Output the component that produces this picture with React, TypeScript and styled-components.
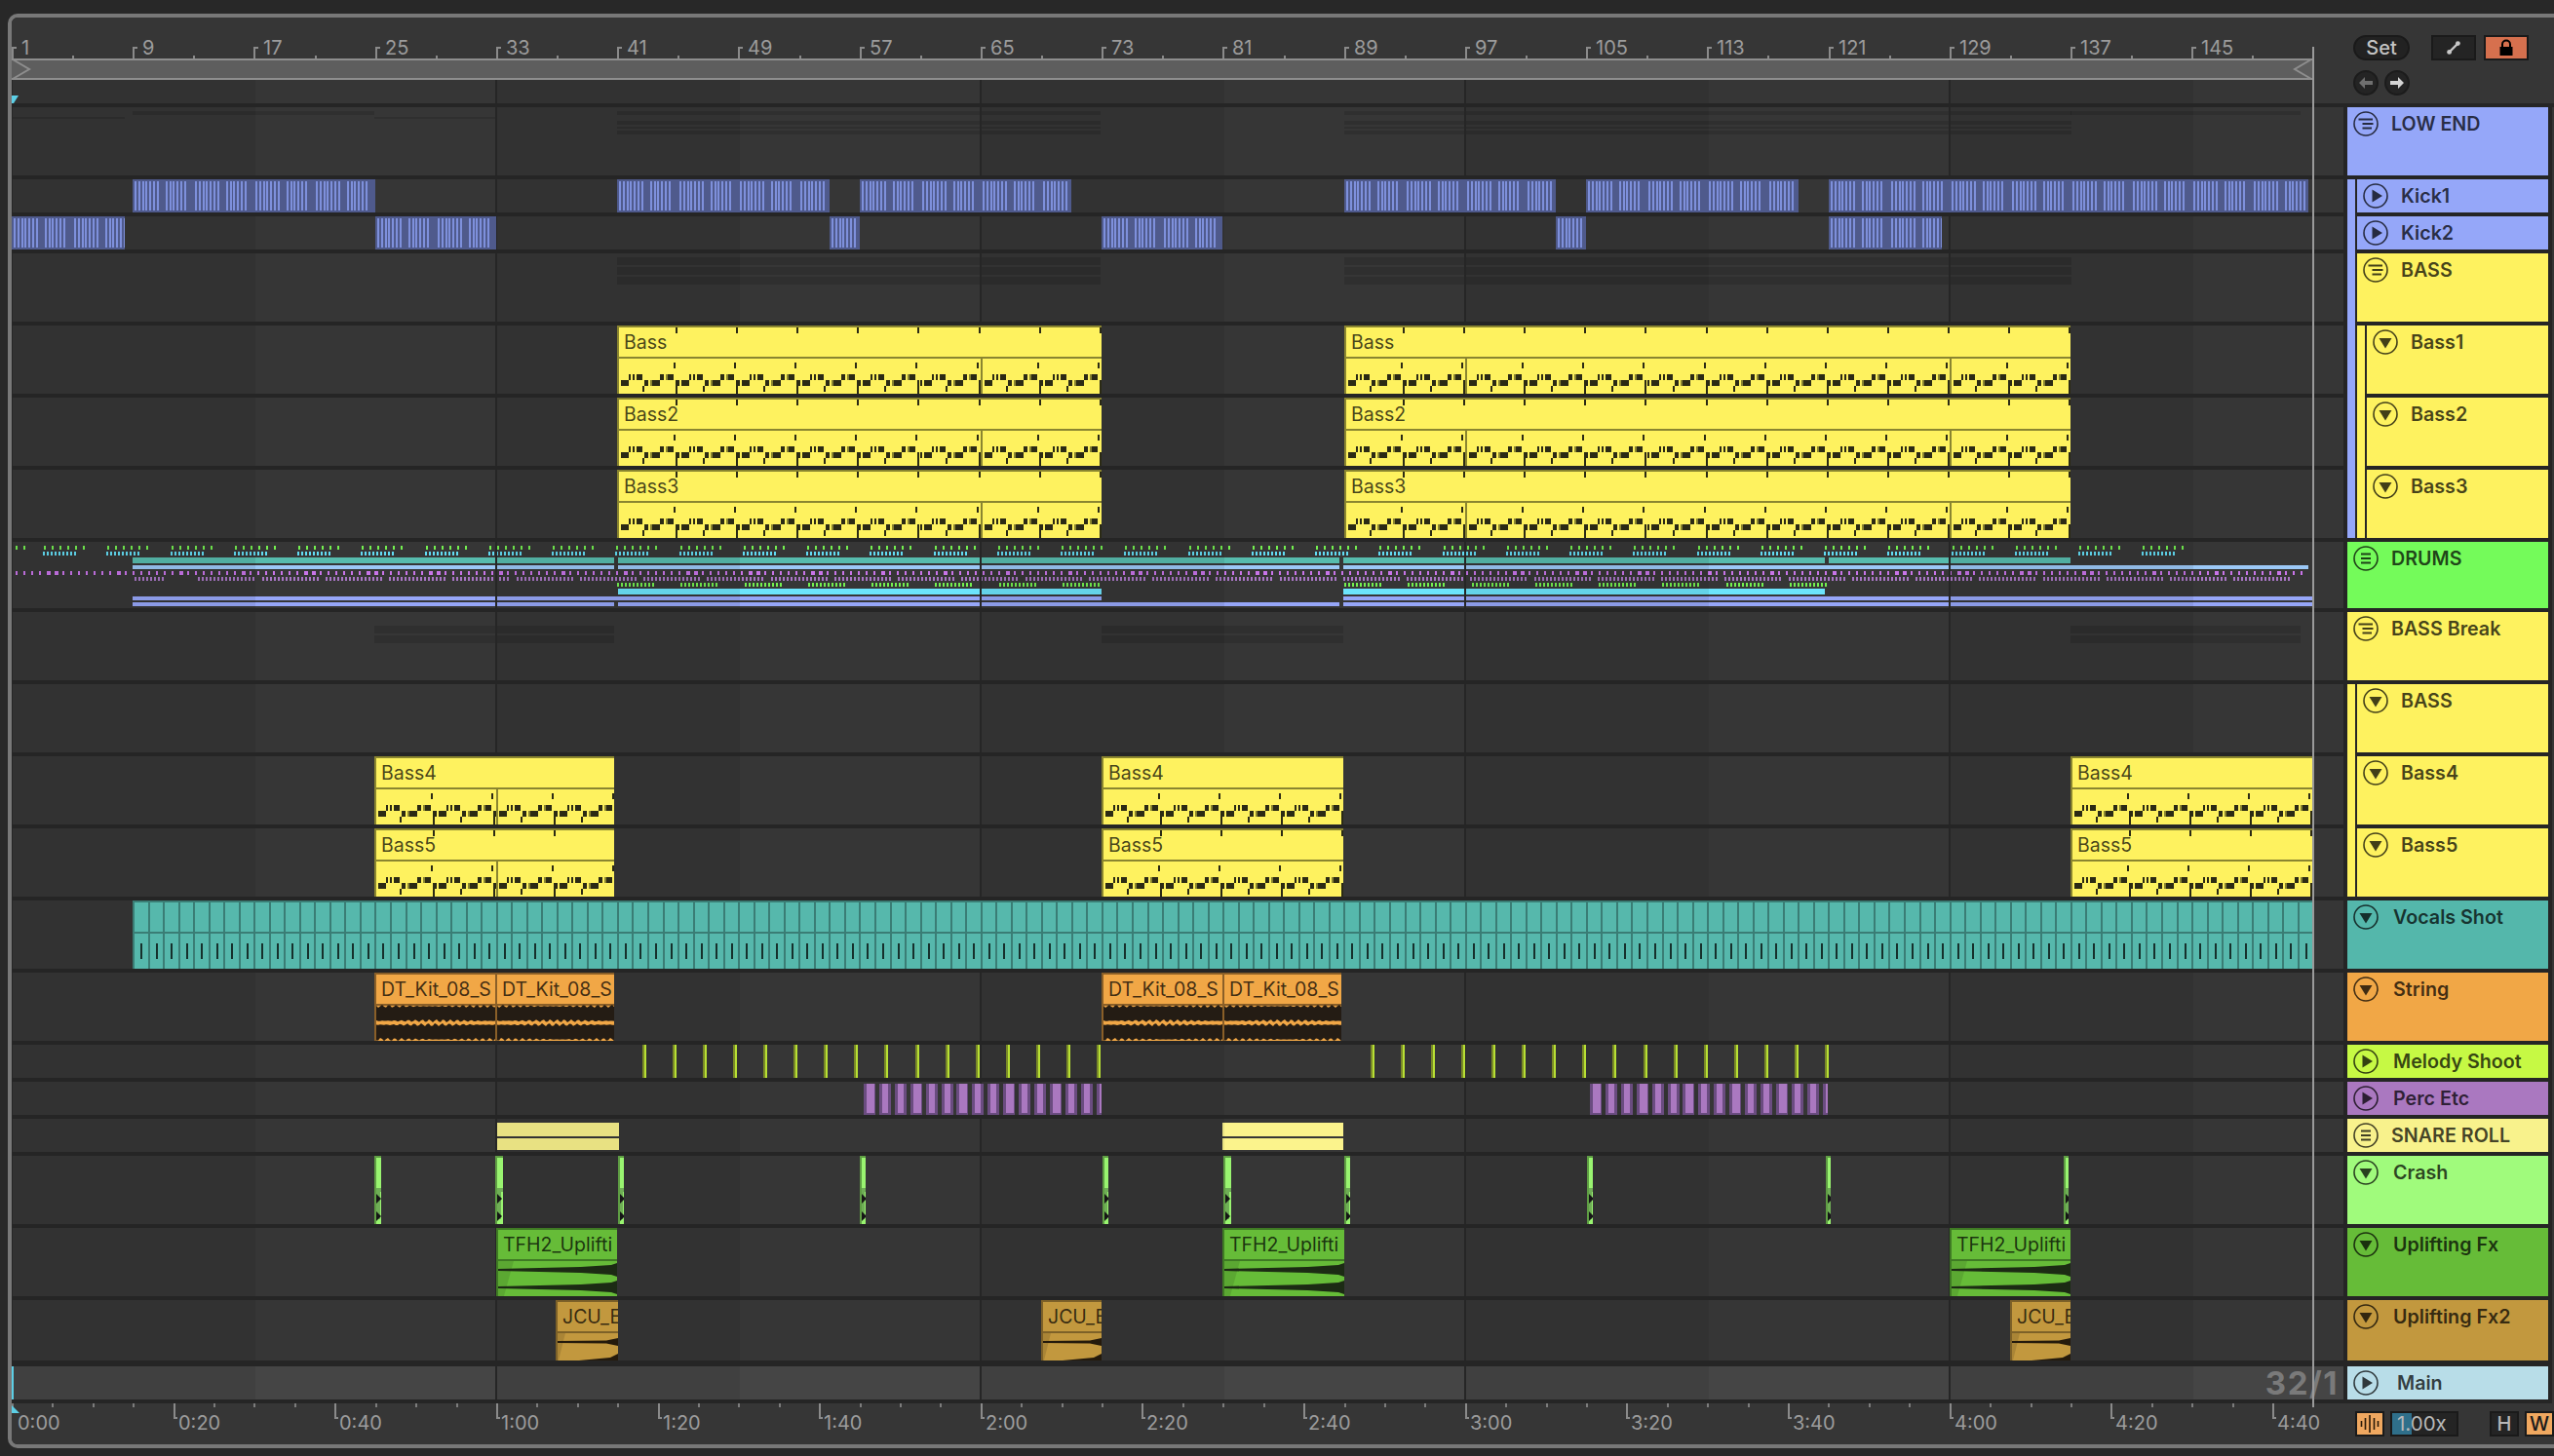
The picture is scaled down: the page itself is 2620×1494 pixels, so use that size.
import React from 'react';
import styled, { createGlobalStyle } from 'styled-components';

const BAR = 15.53;
const SEC = 8.282;
const LANE_W = 2392;
const LOOP_END = 2360;
const DRUM_P = 65.25;
const bx = (b: number) => Math.round((b - 1) * BAR);

const INK = 'rgba(0, 0, 0, 0.74)';
const BLUE = '#95a7f9';
const YELLOW = '#fef25f';
const OLIVE = '#8a8530';

type IconKind = 'group' | 'lines' | 'right' | 'down';

type Track = {
  name: string;
  h: number;
  gap?: number;
  color: string;
  icon: IconKind;
  textLeft?: number;
  stripes?: string[];
  last?: boolean;
};

const tracks: Track[] = [
  { name: 'LOW END', h: 70, color: BLUE, icon: 'group', textLeft: 45 },
  { name: 'Kick1', h: 34, color: BLUE, icon: 'right', textLeft: 45, stripes: [BLUE] },
  { name: 'Kick2', h: 34, color: BLUE, icon: 'right', textLeft: 45, stripes: [BLUE] },
  { name: 'BASS', h: 70, color: YELLOW, icon: 'group', textLeft: 45, stripes: [BLUE] },
  { name: 'Bass1', h: 70, color: YELLOW, icon: 'down', textLeft: 45, stripes: [BLUE, YELLOW] },
  { name: 'Bass2', h: 70, color: YELLOW, icon: 'down', textLeft: 45, stripes: [BLUE, YELLOW] },
  { name: 'Bass3', h: 70, color: YELLOW, icon: 'down', textLeft: 45, stripes: [BLUE, YELLOW], last: true },
  { name: 'DRUMS', h: 68, color: '#74fb5a', icon: 'lines', textLeft: 45 },
  { name: 'BASS Break', h: 70, color: YELLOW, icon: 'group', textLeft: 45 },
  { name: 'BASS', h: 70, color: YELLOW, icon: 'down', textLeft: 45, stripes: [YELLOW] },
  { name: 'Bass4', h: 70, color: YELLOW, icon: 'down', textLeft: 45, stripes: [YELLOW] },
  { name: 'Bass5', h: 70, color: YELLOW, icon: 'down', textLeft: 45, stripes: [YELLOW], last: true },
  { name: 'Vocals Shot', h: 70, color: '#54b7ab', icon: 'down' },
  { name: 'String', h: 70, color: '#f1a746', icon: 'down' },
  { name: 'Melody Shoot', h: 34, color: '#c6f944', icon: 'right' },
  { name: 'Perc Etc', h: 34, color: '#aa78c0', icon: 'right' },
  { name: 'SNARE ROLL', h: 34, color: '#f8f28c', icon: 'lines', textLeft: 45 },
  { name: 'Crash', h: 70, color: '#a0fb7c', icon: 'down' },
  { name: 'Uplifting Fx', h: 70, color: '#66bc38', icon: 'down' },
  { name: 'Uplifting Fx2', h: 62, gap: 6, color: '#c2983e', icon: 'down' },
  { name: 'Main', h: 34, color: '#b8dde8', icon: 'right', textLeft: 51 },
];

const range = (n: number) => Array.from({ length: n }, (_, i) => i);

const GlobalStyle = createGlobalStyle`
  html, body {
    margin: 0;
    padding: 0;
    background: #282828;
    overflow: hidden;
  }
  * { box-sizing: border-box; }
`;

const Page = styled.div`
  width: 2620px;
  height: 1494px;
  padding: 14px 0 8px 8px;
  background: #282828;
  font-family: Inter, "Liberation Sans", sans-serif;
`;

const Frame = styled.div`
  position: relative;
  width: 2612px;
  height: 1472px;
  border: 4px solid #787878;
  border-right: 0;
  border-radius: 10px 0 0 10px;
  background: #252525;
  overflow: hidden;
`;

const TopBar = styled.div`
  display: flex;
  height: 92px;
  border-bottom: 4px solid #252525;
  background: #363636;
`;

const TopLeft = styled.div`
  width: ${LANE_W}px;
  display: flex;
  flex-direction: column;
`;

const BarRuler = styled.div`
  position: relative;
  height: 42px;
`;

const BarMark = styled.div`
  position: absolute;
  top: 30px;
  width: 5px;
  height: 12px;
  border-left: 2px solid #8a8a8a;
  border-top: 2px solid #8a8a8a;
`;

const MinorMark = styled.div`
  position: absolute;
  bottom: 0;
  width: 2px;
  height: 3px;
  background: #8a8a8a;
`;

const BarLabel = styled.span`
  position: absolute;
  top: 20px;
  font-size: 20px;
  line-height: 22px;
  color: #9c9c9c;
`;

const Scrub = styled.div`
  width: ${LOOP_END + 2}px;
  height: 22px;
  background: #5e5e5e;
  border-top: 2px solid #8e8e8e;
  border-bottom: 2px solid #8e8e8e;
  position: relative;
`;

const ScrubMarks = styled.svg`
  position: absolute;
  left: 0;
  top: -2px;
`;

const StartMarker = styled.svg`
  position: absolute;
  left: 0;
  top: 16px;
  z-index: 2;
  width: 8px;
  height: 8px;
`;

const Controls = styled.div`
  flex: 1;
  padding: 18px 0 0 10px;
`;

const ControlRow = styled.div`
  display: flex;
  align-items: center;
`;

const NavRow = styled.div`
  display: flex;
  gap: 6px;
  margin-top: 10px;
`;

const SetPill = styled.div`
  width: 58px;
  height: 26px;
  margin-right: 22px;
  border-radius: 13px;
  background: #222222;
  border: 2px solid #1a1a1a;
  color: #c4c4c4;
  font-size: 20px;
  font-weight: 500;
  line-height: 22px;
  text-align: center;
`;

const SquareBtn = styled.div<{ $bg?: string; $mr?: number }>`
  width: 46px;
  height: 26px;
  margin-right: ${p => p.$mr ?? 0}px;
  background: ${p => p.$bg ?? '#242424'};
  border: 2px solid #1a1a1a;
  display: flex;
  align-items: center;
  justify-content: center;
`;

const NavBtn = styled.div`
  width: 26px;
  height: 26px;
  border-radius: 50%;
  background: #242424;
  border: 2px solid #1c1c1c;
  display: flex;
  align-items: center;
  justify-content: center;
`;

const TrackRow = styled.div<{ $h: number }>`
  display: flex;
  height: ${p => p.$h}px;
  background: #252525;
`;

const Lane = styled.div<{ $h: number; $main?: boolean }>`
  position: relative;
  width: ${LANE_W}px;
  height: ${p => p.$h}px;
  background: ${p => (p.$main ? '#454545' : '#363636')};

  &::after {
    content: '';
    position: absolute;
    inset: 0;
    z-index: 1;
    pointer-events: none;
    background-image: linear-gradient(90deg, rgba(0, 0, 0, 0.075) 0 248.5px, transparent 248.5px 495px, #262626 495px 497px);
    background-size: 497px 100%;
    background-position: 1px 0;
    background-repeat: repeat-x;
  }
`;

const Ghost = styled.div`
  position: absolute;
  background: rgba(0, 0, 0, 0.13);
`;

const Preview = styled.svg`
  position: absolute;
  left: 0;
  top: 0;
`;

const Overlay = styled.svg`
  position: absolute;
  left: -2px;
  top: -2px;
`;

const KickClip = styled.div`
  position: absolute;
  top: 0;
  height: 34px;
  z-index: 2;
  background: #4f5a8c;
  overflow: hidden;

  & > svg {
    left: 0;
    top: 0;
  }
`;

const PercClip = styled.div`
  position: absolute;
  top: 0;
  height: 34px;
  z-index: 2;
  overflow: hidden;

  & > svg {
    left: 0;
    top: 0;
  }
`;

const HitClip = styled.div`
  position: absolute;
  top: 0;
  height: 70px;
  z-index: 2;
  overflow: hidden;

  & > svg {
    left: 0;
    top: 0;
  }
`;

const Tick = styled.div`
  position: absolute;
  top: 0;
  width: 4px;
  height: 34px;
  z-index: 2;
  background: linear-gradient(90deg, #7a8a28 0 2px, #b8e034 2px);
`;

const Clip = styled.div<{ $bg: string; $edge: string }>`
  position: absolute;
  top: 0;
  bottom: 0;
  z-index: 2;
  overflow: hidden;
  background: ${p => p.$bg};
  border-left: 2px solid ${p => p.$edge};
  border-top: 2px solid ${p => p.$edge};
`;

const ClipTitle = styled.div<{ $edge: string }>`
  height: 32px;
  padding: 0 0 0 5px;
  border-bottom: 2px solid ${p => p.$edge};
  font-size: 19.5px;
  line-height: 30px;
  color: ${INK};
  white-space: nowrap;
  overflow: hidden;
`;

const PlayStrip = styled.div`
  position: absolute;
  left: 0;
  top: 0;
  bottom: 0;
  width: 2px;
  z-index: 2;
  background: #5ccfe6;
`;

const GridSize = styled.div`
  position: absolute;
  right: 5px;
  top: 0;
  z-index: 2;
  font-size: 33px;
  line-height: 34px;
  font-weight: 700;
  letter-spacing: 1.5px;
  color: #7a7a7a;
`;

const HeaderCol = styled.div`
  display: flex;
  width: 206px;
  margin-left: 4px;
`;

const Stripe = styled.div<{ $color: string; $h: number }>`
  flex: none;
  width: 8px;
  height: ${p => p.$h}px;
  margin-right: 2px;
  background: ${p => p.$color};
`;

const TrackHead = styled.div<{ $color: string; $h: number }>`
  display: flex;
  align-items: flex-start;
  flex: 1;
  height: ${p => p.$h}px;
  padding: 4px 0 0 6px;
  background: ${p => p.$color};
  color: ${INK};
`;

const IconSvg = styled.svg`
  flex: none;
  width: 26px;
  height: 26px;
`;

const TrackName = styled.span<{ $left: number }>`
  margin-left: ${p => p.$left - 32}px;
  font-size: 19.7px;
  font-weight: 600;
  line-height: 26px;
  white-space: nowrap;
`;

const RightEdge = styled.div`
  flex: 1;
  margin-left: 4px;
  background: #363636;
`;

const BottomBar = styled.div`
  display: flex;
  height: 42px;
  background: #363636;
`;

const TimeRuler = styled.div`
  position: relative;
  width: ${LANE_W}px;
  overflow: hidden;
`;

const EndMarker = styled.svg`
  position: absolute;
  left: 0;
  top: 2px;
  width: 8px;
  height: 8px;
  z-index: 2;
`;

const MinorTime = styled.div`
  position: absolute;
  top: 0;
  width: 2px;
  height: 4px;
  background: #7c7c7c;
`;

const MajorTime = styled.div`
  position: absolute;
  top: 0;
  width: 4px;
  height: 16px;
  border-left: 2px solid #8a8a8a;
  border-bottom: 2px solid #8a8a8a;
`;

const TimeLabel = styled.span`
  position: absolute;
  top: 6px;
  font-size: 20px;
  line-height: 28px;
  color: #9c9c9c;
`;

const BottomControls = styled.div`
  flex: 1;
  display: flex;
  gap: 6px;
  padding: 8px 0 0 16px;
`;

const SquareSmall = styled.div<{ $bg?: string; $fg?: string; $ml?: number }>`
  width: 30px;
  height: 26px;
  margin-left: ${p => p.$ml ?? 0}px;
  background: ${p => p.$bg ?? '#242424'};
  color: ${p => p.$fg ?? '#b8b8b8'};
  border: 2px solid #1a1a1a;
  font-size: 20px;
  font-weight: 500;
  display: flex;
  align-items: center;
  justify-content: center;
`;

const ZoomField = styled.div`
  position: relative;
  width: 70px;
  height: 26px;
  padding-left: 5px;
  background: #242424;
  border: 2px solid #1a1a1a;
  display: flex;
  align-items: center;
`;

const ZoomFill = styled.div`
  position: absolute;
  left: 0;
  top: 0;
  bottom: 0;
  width: 20px;
  background: #2f6f8a;
`;

const ZoomText = styled.span`
  position: relative;
  font-size: 20.5px;
  line-height: 22px;
  color: #b8b8b8;
`;

const LoopLine = styled.div`
  position: absolute;
  left: ${LOOP_END}px;
  top: 30px;
  width: 2px;
  height: 1396px;
  z-index: 3;
  background: #9a9a9a;
`;

const TrackIcon = ({ kind }: { kind: IconKind }) => (
  <IconSvg viewBox="0 0 26 26">
    <circle cx="13" cy="13" r="12" fill="none" stroke="currentColor" strokeWidth="1.6" />
    {kind === 'group' && <path d="M5.5 8.5H20M9.5 13H20.5M9.5 17.5H19" stroke="currentColor" strokeWidth="1.8" />}
    {kind === 'lines' && <path d="M8 8.5H18M8 13H18M8 17.5H18" stroke="currentColor" strokeWidth="1.8" />}
    {kind === 'right' && <path d="M9.5 6.5L20 13L9.5 19.5Z" fill="currentColor" />}
    {kind === 'down' && <path d="M6.5 9H19.5L13 19.5Z" fill="currentColor" />}
  </IconSvg>
);

const MIDI_A: [number, number][] = [[12, 2], [16, 2], [20, 6], [44, 4], [52, 6]];
const MIDI_B: [number, number][] = [[0, 2], [4, 8], [28, 4], [36, 8], [60, 2]];

const MidiNotes = ({ left, width, titleTicks }: { left: number; width: number; titleTicks: boolean }) => {
  const P = 62.12;
  const n = Math.ceil(width / P);
  const dark = '#2b2a14';
  return (
    <Overlay width={width} height={70} shapeRendering="crispEdges">
      {range(n).map(k => {
        const o = Math.round(k * P);
        return (
          <g key={k}>
            {MIDI_A.map(([x, w]) => <rect key={x} x={o + x} y={50} width={w} height={6} fill={dark} />)}
            <rect x={o + 50} y={50} width={2} height={6} fill={OLIVE} />
            {MIDI_B.map(([x, w]) => <rect key={x} x={o + x} y={56} width={w} height={6} fill={dark} />)}
            <rect x={o + 34} y={56} width={2} height={6} fill={OLIVE} />
            <rect x={o + 26} y={62} width={2} height={6} fill={dark} />
            <rect x={o + 60} y={62} width={2} height={8} fill={dark} />
            <rect x={o + 58} y={38} width={2} height={6} fill={dark} />
            {titleTicks && <rect x={o + 60} y={2} width={2} height={6} fill={dark} />}
          </g>
        );
      })}
      {[33, 65, 97, 129].map(b => (
        <rect key={b} x={bx(b) - left} y={34} width={2} height={36} fill={OLIVE} />
      ))}
    </Overlay>
  );
};

const jag = (w: number, cy: number, amp: number, seed: number) => {
  const n = (x: number, s: number) => amp + Math.sin(x * 0.9 + s) * 0.9 + Math.sin(x * 2.3 + s * 2) * 0.7;
  let top = `M0 ${cy}`;
  let bot = '';
  for (let x = 0; x <= w; x += 2) {
    top += `L${x} ${(cy - n(x, seed)).toFixed(1)}`;
    bot = `L${x} ${(cy + n(x, seed + 3)).toFixed(1)}` + bot;
  }
  return top + bot + 'Z';
};

const StringWave = ({ width }: { width: number }) => (
  <Overlay width={width} height={70}>
    <path d={jag(width, 42, 7.5, 1)} fill="#241c14" />
    <path d={jag(width, 61, 7.5, 2)} fill="#241c14" />
  </Overlay>
);

const wedge = (w: number, cy: number) =>
  `M0 ${cy - 1}L${w * 0.7} ${cy - 3}L${w - 6} ${cy - 5}L${w} ${cy - 7}V${cy + 7}L${w - 6} ${cy + 5}L${w * 0.7} ${cy + 3}L0 ${cy + 1}Z`;

const FxWave = ({ width }: { width: number }) => (
  <Overlay width={width} height={70}>
    <path d="M0 34H18L8 70H0Z" fill="rgba(0,0,0,0.1)" />
    <path d={wedge(width, 43)} fill="#1c2b14" />
    <path d={wedge(width, 61)} fill="#1c2b14" />
  </Overlay>
);

const GoldWave = ({ width }: { width: number }) => (
  <Overlay width={width} height={62}>
    <path d="M0 34H10L3 62H0Z" fill="rgba(0,0,0,0.12)" />
    <path d={`M0 42L${width - 12} 41.5L${width} 39V47L${width - 12} 44.5L0 44Z`} fill="#241a0c" />
    <path d={`M${width - 40} 62L${width - 8} 59L${width} 55V62Z`} fill="#241a0c" />
  </Overlay>
);

const KickHits = ({ width }: { width: number }) => {
  const P = 31.06;
  const n = Math.ceil(width / P);
  return (
    <Overlay width={width} height={34} shapeRendering="crispEdges">
      {range(n).map(k => {
        const o = Math.round(k * P);
        const offs = k % 2 === 0 ? [2, 6, 10, 13, 17, 21, 25] : [3, 7, 10, 14, 18, 22];
        return offs.map(x => <rect key={`${k}-${x}`} x={o + x} y={2} width={2} height={30} fill="#7e90dc" />);
      })}
    </Overlay>
  );
};

const PercHits = ({ width }: { width: number }) => (
  <Overlay width={width} height={34} shapeRendering="crispEdges">
    {range(Math.ceil(width / 15.9)).map(k => {
      const o = Math.round(k * 15.9);
      return (
        <g key={k}>
          <rect x={o} y={2} width={12} height={32} fill="#6a4c80" />
          <rect x={o + 3} y={2} width={k % 3 === 0 ? 8 : 6} height={30} fill="#aa78c0" />
        </g>
      );
    })}
  </Overlay>
);

const CrashHit = ({ width }: { width: number }) => (
  <Overlay width={width} height={70} shapeRendering="crispEdges">
    <rect x={0} y={0} width={width} height={70} fill="#99f470" />
    <rect x={0} y={0} width={2} height={70} fill="#5f9e44" />
    <rect x={0} y={0} width={width} height={2} fill="#5f9e44" />
    <rect x={2} y={33} width={width} height={4} fill="#6fae56" />
    <rect x={2} y={37} width={width / 2} height={28} fill="#6fae56" />
    <path d="M2 39L7 44L2 49Z" fill="#161616" shapeRendering="auto" />
    <path d="M2 57L7 62L2 67Z" fill="#161616" shapeRendering="auto" />
  </Overlay>
);

const VocalStrip = ({ width }: { width: number }) => {
  const n = Math.ceil(width / BAR);
  const line = '#3a7d75';
  return (
    <Overlay width={width} height={70} shapeRendering="crispEdges">
      <rect x={0} y={0} width={width} height={2} fill={line} />
      <rect x={0} y={32} width={width} height={2} fill={line} />
      {range(n).map(k => {
        const x = Math.round(k * BAR);
        return (
          <g key={k}>
            <rect x={x} y={0} width={2} height={70} fill={line} />
            <rect x={x + 8} y={44} width={2} height={16} fill="#16302c" />
          </g>
        );
      })}
    </Overlay>
  );
};

// ---- what sits in each lane, in pixels or bars from the arrangement start ----

const Ghosts = ({ items }: { items: [number, number, number, number][] }) => (
  <>
    {items.map(([x, y, w, h], i) => (
      <Ghost key={i} style={{ left: x, top: y, width: w, height: h }} />
    ))}
  </>
);

const spanBars = (from: number, to: number) => ({ left: bx(from), width: bx(to) - bx(from) });

const lowEndGhosts: [number, number, number, number][] = [
  [0, 10, 116, 2], [124, 4, 248, 4], [372, 10, 124, 2],
  ...[bx(41), bx(89)].flatMap((x, i) => {
    const w = i === 0 ? 496 : 746;
    return [[x, 4, w, 4], [x, 14, w, 4], [x, 20, w, 2], [x, 24, w, 4]] as [number, number, number, number][];
  }),
  [bx(137), 4, 236, 4],
];

const bassGhosts: [number, number, number, number][] = [bx(41), bx(89)].flatMap((x, i) => {
  const w = i === 0 ? 496 : 746;
  return [[x, 4, w, 8], [x, 14, w, 8], [x, 24, w, 8]] as [number, number, number, number][];
});

const breakGhosts: [number, number, number, number][] = [
  [372, 14, 246, 8], [372, 24, 246, 8],
  [bx(73), 14, 248, 8], [bx(73), 24, 248, 8],
  [bx(137), 14, 236, 8], [bx(137), 24, 236, 8],
];

const DrumsPreview = () => {
  const rects: React.ReactNode[] = [];
  const add = (x: number, y: number, w: number, h: number, fill: string) =>
    rects.push(<rect key={rects.length} x={x} y={y} width={w} height={h} fill={fill} />);

  add(4, 4, 2, 4, '#74f050');
  add(12, 4, 2, 4, '#74f050');
  for (let k = 0; k < 34; k++) {
    const o = Math.round(33 + k * DRUM_P);
    if (o > 2230) break;
    range(6).forEach(i => add(o + i * 8, 4, 2, 4, '#74f050'));
    range(9).forEach(i => add(o + i * 4 - 1, 10, 2, 4, '#62dcf4'));
  }
  for (let x = 4; x < 2356; x += 8) {
    const m = ((x - 36) % DRUM_P + DRUM_P) % DRUM_P;
    add(x, 30, m < 12 ? 4 : 2, 4, '#c874e8');
  }
  for (let k = 0; k < 35; k++) {
    const o = Math.round(126 + k * DRUM_P);
    if (o + 60 > LOOP_END) break;
    range(k === 0 ? 8 : 15).forEach(i => add(o + i * 4, 36, 2, 4, '#a876c4'));
  }
  [[bx(41), bx(73)], [bx(89), bx(121)]].forEach(([a, b]) => {
    for (let k = 0; a + k * DRUM_P + 36 < b; k++) {
      range(10).forEach(i => add(Math.round(a + k * DRUM_P) + i * 4, 42, 2, 4, '#74f050'));
    }
  });

  const bars: [number, number, number, number, string][] = [
    [124, 618, 16, 6, '#57bcae'],
    [622, 1362, 16, 6, '#57bcae'],
    [1366, 1860, 16, 6, '#57bcae'],
    [1864, 2112, 16, 6, '#57bcae'],
    [124, 618, 24, 4, '#9cc8f6'],
    [622, 1362, 24, 4, '#9cc8f6'],
    [1366, 2356, 24, 4, '#9cc8f6'],
    [622, 1118, 48, 6, '#6ce4fc'],
    [1366, 1860, 48, 6, '#6ce4fc'],
    [124, 1118, 56, 4, '#96a6f8'],
    [1366, 2360, 56, 4, '#96a6f8'],
    [124, 618, 62, 4, '#96a6f8'],
    [622, 1362, 62, 4, '#96a6f8'],
    [1366, 2360, 62, 4, '#96a6f8'],
  ];
  bars.forEach(([a, b, y, h, c]) => add(a, y, b - a, h, c));

  return (
    <Preview width={LANE_W} height={68} shapeRendering="crispEdges">
      {rects}
    </Preview>
  );
};

type TitledProps = {
  left: number;
  width: number;
  title: string;
  bg: string;
  edge: string;
  children?: React.ReactNode;
};

const TitledClip = ({ left, width, title, bg, edge, children }: TitledProps) => (
  <Clip style={{ left, width }} $bg={bg} $edge={edge}>
    <ClipTitle $edge={edge}>{title}</ClipTitle>
    {children}
  </Clip>
);

const BassClip = ({ from, to, title }: { from: number; to: number; title: string }) => {
  const { left, width } = spanBars(from, to);
  return (
    <TitledClip left={left} width={width} title={title} bg={YELLOW} edge={OLIVE}>
      <MidiNotes left={left} width={width} titleTicks />
    </TitledClip>
  );
};

const breakSpans: [number, number][] = [[372, 246], [bx(73), 248], [bx(137), LOOP_END - bx(137)]];

const kickClips = (spans: [number, number][]) =>
  spans.map(([a, b]) => {
    const s = spanBars(a, b);
    return <KickClip key={a} style={s}><KickHits width={s.width} /></KickClip>;
  });

const crashHits: [number, number][] = [
  [372, 7], [496, 8], [622, 6], [870, 6], [1119, 6], [1243, 8], [1367, 6], [1616, 6], [1861, 5], [2105, 5],
];

const goldClips: [number, number][] = [[558, 64], [1056, 62], [2050, 62]];

const LaneContent = ({ index }: { index: number }) => {
  switch (index) {
    case 0:
      return <Ghosts items={lowEndGhosts} />;
    case 1:
      return <>{kickClips([[9, 25], [41, 55], [57, 71], [89, 103], [105, 119], [121, 137], [137, 152.7]])}</>;
    case 2:
      return <>{kickClips([[1, 8.5], [25, 33], [55, 57], [73, 81], [103, 105], [121, 128.5]])}</>;
    case 3:
      return <Ghosts items={bassGhosts} />;
    case 4:
      return <><BassClip from={41} to={73} title="Bass" /><BassClip from={89} to={137} title="Bass" /></>;
    case 5:
      return <><BassClip from={41} to={73} title="Bass2" /><BassClip from={89} to={137} title="Bass2" /></>;
    case 6:
      return <><BassClip from={41} to={73} title="Bass3" /><BassClip from={89} to={137} title="Bass3" /></>;
    case 7:
      return <DrumsPreview />;
    case 8:
      return <Ghosts items={breakGhosts} />;
    case 10:
    case 11:
      return (
        <>
          {breakSpans.map(([left, width]) => (
            <TitledClip key={left} left={left} width={width} title={index === 10 ? 'Bass4' : 'Bass5'} bg={YELLOW} edge={OLIVE}>
              <MidiNotes left={left} width={width} titleTicks={index === 11} />
            </TitledClip>
          ))}
        </>
      );
    case 12:
      return (
        <Clip style={{ left: 124, width: LOOP_END - 124 }} $bg="#56b8ac" $edge="#3a7d75">
          <VocalStrip width={LOOP_END - 124} />
        </Clip>
      );
    case 13:
      return (
        <>
          {([[372, 124], [496, 122], [bx(73), 124], [bx(81), 122]] as [number, number][]).map(([left, width]) => (
            <TitledClip key={left} left={left} width={width} title="DT_Kit_08_S" bg="#f1a746" edge="#8a5f28">
              <StringWave width={width} />
            </TitledClip>
          ))}
        </>
      );
    case 14:
      return (
        <>
          {[bx(41) + 26, bx(89) + 27].flatMap((start, g) =>
            range(16).map(k => <Tick key={`${g}-${k}`} style={{ left: Math.round(start + k * 31.06) }} />)
          )}
        </>
      );
    case 15:
      return (
        <>
          {[874, 1619].map(left => (
            <PercClip key={left} style={{ left, width: 244 }}><PercHits width={244} /></PercClip>
          ))}
        </>
      );
    case 16:
      return (
        <Preview width={LANE_W} height={34} shapeRendering="crispEdges">
          {[bx(33), bx(81)].map(x => (
            <g key={x}>
              <rect x={x} y={4} width={x === bx(33) ? 126 : 124} height={14} fill="#fbf38c" />
              <rect x={x} y={20} width={x === bx(33) ? 126 : 124} height={12} fill="#fbf38c" />
            </g>
          ))}
        </Preview>
      );
    case 17:
      return (
        <>
          {crashHits.map(([left, w]) => (
            <HitClip key={left} style={{ left, width: w }}><CrashHit width={w} /></HitClip>
          ))}
        </>
      );
    case 18:
      return (
        <>
          {[33, 81, 129].map(b => (
            <TitledClip key={b} left={bx(b)} width={bx(b + 8) - bx(b)} title="TFH2_Uplifti" bg="#66bc38" edge="#3f7a24">
              <FxWave width={bx(b + 8) - bx(b)} />
            </TitledClip>
          ))}
        </>
      );
    case 19:
      return (
        <>
          {goldClips.map(([left, width]) => (
            <TitledClip key={left} left={left} width={width} title="JCU_E" bg="#c2983e" edge="#7d6128">
              <GoldWave width={width} />
            </TitledClip>
          ))}
        </>
      );
    default:
      return null;
  }
};

const rulerBars = range(19).map(i => 1 + i * 8);
const timeLabels = range(15).map(i => i * 20);

const fmt = (t: number) => `${Math.floor(t / 60)}:${String(t % 60).padStart(2, '0')}`;

export default function App() {
  return (
    <>
      <GlobalStyle />
      <Page>
        <Frame>
          <TopBar>
            <TopLeft>
              <BarRuler>
                {rulerBars.map(b => (
                  <React.Fragment key={b}>
                    <BarMark style={{ left: bx(b) }} />
                    <BarLabel style={{ left: bx(b) + 10 }}>{b}</BarLabel>
                    <MinorMark style={{ left: bx(b + 4) }} />
                  </React.Fragment>
                ))}
              </BarRuler>
              <Scrub>
                <ScrubMarks width={LOOP_END} height={22}>
                  <path d="M1 1L18 11L1 21" fill="none" stroke="#8e8e8e" strokeWidth="2" />
                  <path d={`M${LOOP_END - 1} 1L${LOOP_END - 18} 11L${LOOP_END - 1} 21`} fill="none" stroke="#8e8e8e" strokeWidth="2" />
                </ScrubMarks>
              </Scrub>
              <Lane $h={24}>
                <StartMarker viewBox="0 0 8 8"><path d="M0 0H7L2 8H0Z" fill="#5ccfe6" /></StartMarker>
              </Lane>
            </TopLeft>
            <Controls>
              <ControlRow>
                <SetPill>Set</SetPill>
                <SquareBtn $mr={8}>
                  <svg width="14" height="14" viewBox="0 0 14 14">
                    <path d="M2.5 11.5L11.5 2.5" stroke="#c8c8c8" strokeWidth="2.4" />
                    <circle cx="2.6" cy="11.4" r="2.4" fill="#c8c8c8" />
                    <circle cx="11.4" cy="2.6" r="2.4" fill="#c8c8c8" />
                  </svg>
                </SquareBtn>
                <SquareBtn $bg="#d6704e">
                  <svg width="16" height="18" viewBox="0 0 16 18">
                    <path d="M4 8V5.5a4 4 0 0 1 8 0V8" fill="none" stroke="#000" strokeWidth="2" />
                    <rect x="1.5" y="8" width="13" height="9" fill="#000" />
                  </svg>
                </SquareBtn>
              </ControlRow>
              <NavRow>
                <NavBtn>
                  <svg width="16" height="14" viewBox="0 0 16 14">
                    <path d="M7 1L1 7L7 13V9H15V5H7Z" fill="#6f6f6f" />
                  </svg>
                </NavBtn>
                <NavBtn>
                  <svg width="16" height="14" viewBox="0 0 16 14">
                    <path d="M9 1L15 7L9 13V9H1V5H9Z" fill="#d4d4d4" />
                  </svg>
                </NavBtn>
              </NavRow>
            </Controls>
          </TopBar>

          {tracks.map((t, i) => (
            <TrackRow key={`${t.name}-${i}`} $h={t.h + (t.gap ?? 4)}>
              <Lane $h={t.h} $main={t.name === 'Main'}>
                <LaneContent index={i} />
                {t.name === 'Main' && (
                  <>
                    <PlayStrip />
                    <GridSize>32/1</GridSize>
                  </>
                )}
              </Lane>
              <HeaderCol>
                {(t.stripes ?? []).map((c, s) => (
                  <Stripe key={s} $color={c} $h={t.last ? t.h : t.h + (t.gap ?? 4)} />
                ))}
                <TrackHead $color={t.color} $h={t.h}>
                  <TrackIcon kind={t.icon} />
                  <TrackName $left={t.textLeft ?? 47}>{t.name}</TrackName>
                </TrackHead>
              </HeaderCol>
              <RightEdge />
            </TrackRow>
          ))}

          <BottomBar>
            <TimeRuler>
              <EndMarker viewBox="0 0 8 8"><path d="M0 0L8 8H0Z" fill="#5ccfe6" /></EndMarker>
              {range(67).map(i => (
                <MinorTime key={i} style={{ left: Math.round(i * 5 * SEC) }} />
              ))}
              {timeLabels.map(t => (
                <React.Fragment key={t}>
                  {t > 0 && <MajorTime style={{ left: Math.round(t * SEC) }} />}
                  <TimeLabel style={{ left: Math.round(t * SEC) + (t === 0 ? 6 : 5) }}>{fmt(t)}</TimeLabel>
                </React.Fragment>
              ))}
            </TimeRuler>
            <BottomControls>
              <SquareSmall $bg="#f0a860">
                <svg width="20" height="20" viewBox="0 0 20 20">
                  <path d="M1.5 7V13M5.5 4V16M10 1V19M14.5 4V16M18.5 7V13" stroke="#2a1a08" strokeWidth="1.6" />
                </svg>
              </SquareSmall>
              <ZoomField>
                <ZoomFill />
                <ZoomText>1.00x</ZoomText>
              </ZoomField>
              <SquareSmall $ml={26}>H</SquareSmall>
              <SquareSmall $bg="#f0a860" $fg="#1a1a1a">W</SquareSmall>
            </BottomControls>
          </BottomBar>
          <LoopLine />
        </Frame>
      </Page>
    </>
  );
}
